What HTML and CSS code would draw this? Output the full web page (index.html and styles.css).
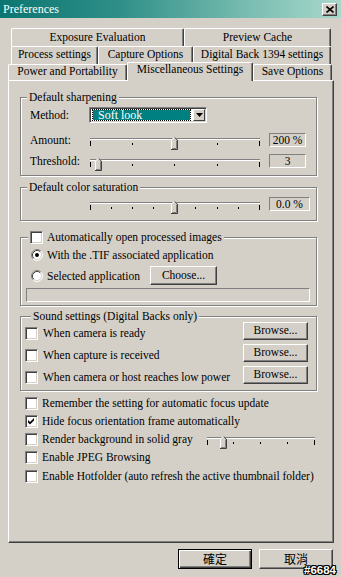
FILE: index.html
```html
<!DOCTYPE html>
<html>
<head>
<meta charset="utf-8">
<title>Preferences</title>
<link rel="stylesheet" href="styles.css">
</head>
<body>
<div class="window">
  <div class="titlebar">
    <span class="title">Preferences</span>
    <span class="close"><svg width="8" height="7" viewBox="0 0 8 7"><path d="M0.5 0.5 L7.5 6.5 M7.5 0.5 L0.5 6.5" stroke="#000" stroke-width="1.6" fill="none"/></svg></span>
  </div>

  <div class="tabs">
    <div class="tabrow row1">
      <div class="tab">Exposure Evaluation</div>
      <div class="tab">Preview Cache</div>
    </div>
    <div class="tabrow row2">
      <div class="tab">Process settings</div>
      <div class="tab">Capture Options</div>
      <div class="tab">Digital Back 1394 settings</div>
    </div>
    <div class="tabrow row3">
      <div class="tab">Power and Portability</div>
      <div class="tab active">Miscellaneous Settings</div>
      <div class="tab">Save Options</div>
    </div>
  </div>

  <div class="panel">
    <fieldset class="group g-sharp">
      <legend>Default sharpening</legend>
      <div class="row method-row">
        <span class="lbl">Method:</span>
        <div class="combo">
          <div class="combo-field"><span class="combo-sel">Soft look</span></div>
          <div class="combo-btn"><svg width="7" height="4" viewBox="0 0 7 4"><polygon points="0,0 7,0 3.5,4" fill="#000"/></svg></div>
        </div>
      </div>
      <div class="row slider-row amount-row">
        <span class="lbl">Amount:</span>
        <svg class="trk" width="172" height="16" viewBox="0 0 172 16">
          <rect x="1" y="6" width="170" height="1" fill="#808080"/>
          <rect x="1" y="7" width="170" height="1" fill="#fff"/>
          <g fill="#000">
            <rect x="1" y="9" width="1" height="5"/>
            <rect x="43" y="11" width="1" height="2"/>
            <rect x="85" y="11" width="1" height="2"/>
            <rect x="128" y="11" width="1" height="2"/>
            <rect x="170" y="9" width="1" height="5"/>
          </g>
          <g transform="translate(82 5)">
            <path d="M0 3 L3 0 L4 0 L7 3 L7 13 L0 13 Z" fill="#d4d0c8"/>
            <path d="M0.5 13 V3.2 L3.3 0.5" stroke="#fff" fill="none"/>
            <path d="M3.7 0.5 L6.5 3.2 V12.5 H0" stroke="#404040" fill="none"/>
            <path d="M5.5 3.6 V11.5 H1" stroke="#808080" fill="none"/>
          </g>
        </svg>
        <div class="valbox">200 %</div>
      </div>
      <div class="row slider-row threshold-row">
        <span class="lbl">Threshold:</span>
        <svg class="trk" width="172" height="16" viewBox="0 0 172 16">
          <rect x="1" y="6" width="170" height="1" fill="#808080"/>
          <rect x="1" y="7" width="170" height="1" fill="#fff"/>
          <g fill="#000">
            <rect x="1" y="9" width="1" height="5"/>
            <rect x="43" y="11" width="1" height="2"/>
            <rect x="85" y="11" width="1" height="2"/>
            <rect x="128" y="11" width="1" height="2"/>
            <rect x="170" y="9" width="1" height="5"/>
          </g>
          <g transform="translate(6 5)">
            <path d="M0 3 L3 0 L4 0 L7 3 L7 13 L0 13 Z" fill="#d4d0c8"/>
            <path d="M0.5 13 V3.2 L3.3 0.5" stroke="#fff" fill="none"/>
            <path d="M3.7 0.5 L6.5 3.2 V12.5 H0" stroke="#404040" fill="none"/>
            <path d="M5.5 3.6 V11.5 H1" stroke="#808080" fill="none"/>
          </g>
        </svg>
        <div class="valbox">3</div>
      </div>
    </fieldset>

    <fieldset class="group g-sat">
      <legend>Default color saturation</legend>
      <div class="row slider-row sat-row">
        <svg class="trk" width="172" height="16" viewBox="0 0 172 16">
          <rect x="1" y="6" width="170" height="1" fill="#808080"/>
          <rect x="1" y="7" width="170" height="1" fill="#fff"/>
          <g fill="#000">
            <rect x="1" y="9" width="1" height="5"/>
            <rect x="22" y="11" width="1" height="2"/>
            <rect x="43" y="11" width="1" height="2"/>
            <rect x="64" y="11" width="1" height="2"/>
            <rect x="85" y="11" width="1" height="2"/>
            <rect x="106" y="11" width="1" height="2"/>
            <rect x="128" y="11" width="1" height="2"/>
            <rect x="149" y="11" width="1" height="2"/>
            <rect x="170" y="9" width="1" height="5"/>
          </g>
          <g transform="translate(82 5)">
            <path d="M0 3 L3 0 L4 0 L7 3 L7 13 L0 13 Z" fill="#d4d0c8"/>
            <path d="M0.5 13 V3.2 L3.3 0.5" stroke="#fff" fill="none"/>
            <path d="M3.7 0.5 L6.5 3.2 V12.5 H0" stroke="#404040" fill="none"/>
            <path d="M5.5 3.6 V11.5 H1" stroke="#808080" fill="none"/>
          </g>
        </svg>
        <div class="valbox wide">0.0 %</div>
      </div>
    </fieldset>

    <fieldset class="group g-open">
      <legend><span class="legend-cb"><span class="cb"></span><span class="legend-text">Automatically open processed images</span></span></legend>
      <div class="row radio-row first">
        <svg class="radio" width="12" height="12" viewBox="0 0 12 12">
          <circle cx="6" cy="6" r="5" fill="#fff"/>
          <path d="M2.11 9.89 A5.5 5.5 0 0 1 9.89 2.11" stroke="#808080" fill="none"/>
          <path d="M9.89 2.11 A5.5 5.5 0 0 1 2.11 9.89" stroke="#fff" fill="none"/>
          <path d="M2.82 9.18 A4.5 4.5 0 0 1 9.18 2.82" stroke="#404040" fill="none"/>
          <path d="M9.18 2.82 A4.5 4.5 0 0 1 2.82 9.18" stroke="#d4d0c8" fill="none"/>
          <circle cx="6" cy="6" r="2" fill="#000"/>
        </svg>
        <span class="radio-text">With the .TIF associated application</span>
      </div>
      <div class="row radio-row second">
        <svg class="radio" width="12" height="12" viewBox="0 0 12 12">
          <circle cx="6" cy="6" r="5" fill="#fff"/>
          <path d="M2.11 9.89 A5.5 5.5 0 0 1 9.89 2.11" stroke="#808080" fill="none"/>
          <path d="M9.89 2.11 A5.5 5.5 0 0 1 2.11 9.89" stroke="#fff" fill="none"/>
          <path d="M2.82 9.18 A4.5 4.5 0 0 1 9.18 2.82" stroke="#404040" fill="none"/>
          <path d="M9.18 2.82 A4.5 4.5 0 0 1 2.82 9.18" stroke="#d4d0c8" fill="none"/>
        </svg>
        <span class="radio-text fixed">Selected application</span>
        <div class="btn choose">Choose...</div>
      </div>
      <div class="textfield"></div>
    </fieldset>

    <fieldset class="group g-sound">
      <legend>Sound settings (Digital Backs only)</legend>
      <div class="row sound-row">
        <span class="cb"></span><span class="cb-text">When camera is ready</span>
        <div class="btn browse">Browse...</div>
      </div>
      <div class="row sound-row">
        <span class="cb"></span><span class="cb-text">When capture is received</span>
        <div class="btn browse">Browse...</div>
      </div>
      <div class="row sound-row">
        <span class="cb"></span><span class="cb-text">When camera or host reaches low power</span>
        <div class="btn browse">Browse...</div>
      </div>
    </fieldset>

    <div class="checks">
      <div class="row check-row"><span class="cb"></span><span class="cb-text">Remember the setting for automatic focus update</span></div>
      <div class="row check-row"><span class="cb"><svg width="11" height="11" viewBox="0 0 11 11"><polygon points="2,4 4,6 8,2 8,4.5 4,8.5 2,6.5" fill="#000"/></svg></span><span class="cb-text">Hide focus orientation frame automatically</span></div>
      <div class="row check-row render-row">
        <span class="cb"></span><span class="cb-text render-text">Render background in solid gray</span>
        <svg class="trk small" width="110" height="16" viewBox="0 0 110 16">
          <rect x="1" y="6" width="108" height="1" fill="#808080"/>
          <rect x="1" y="7" width="108" height="1" fill="#fff"/>
          <g fill="#000">
            <rect x="1" y="9" width="1" height="5"/>
            <rect x="27" y="11" width="1" height="2"/>
            <rect x="54" y="11" width="1" height="2"/>
            <rect x="81" y="11" width="1" height="2"/>
            <rect x="108" y="9" width="1" height="5"/>
          </g>
          <g transform="translate(14 5)">
            <path d="M0 3 L3 0 L4 0 L7 3 L7 13 L0 13 Z" fill="#d4d0c8"/>
            <path d="M0.5 13 V3.2 L3.3 0.5" stroke="#fff" fill="none"/>
            <path d="M3.7 0.5 L6.5 3.2 V12.5 H0" stroke="#404040" fill="none"/>
            <path d="M5.5 3.6 V11.5 H1" stroke="#808080" fill="none"/>
          </g>
        </svg>
      </div>
      <div class="row check-row"><span class="cb"></span><span class="cb-text">Enable JPEG Browsing</span></div>
      <div class="row check-row last"><span class="cb"></span><span class="cb-text clip">Enable Hotfolder (auto refresh the active thumbnail folder)</span></div>
    </div>
  </div>

  <div class="buttons">
    <div class="btn dlg default">確定</div>
    <div class="btn dlg">取消</div>
  </div>

  <div class="watermark">#6684</div>
</div>
</body>
</html>
```

FILE: styles.css
```css
* { box-sizing: border-box; }
html, body { margin: 0; padding: 0; }
body {
  width: 341px;
  height: 577px;
  overflow: hidden;
  background: #d4d0c8;
  font-family: "Liberation Serif", "Times New Roman", serif;
  font-size: 11.5px;
  color: #000;
}
.window { position: relative; width: 341px; height: 577px; }

/* title bar */
.titlebar {
  height: 18px;
  display: flex;
  align-items: flex-start;
  justify-content: space-between;
  padding: 0 4px 0 3px;
  background: linear-gradient(to right, #0b7671 0%, #2f8f88 35%, #7dbfb3 75%, #a9d8cc 100%);
  color: #fff;
}
.title { line-height: 19px; font-size: 12px; }
.close {
  margin-top: 3px;
  width: 15px;
  height: 13px;
  background: #d4d0c8;
  border: 1px solid;
  border-color: #fff #404040 #404040 #fff;
  box-shadow: inset -1px -1px 0 #808080;
  display: flex;
  align-items: center;
  justify-content: center;
}

/* tabs */
.tabs { margin-top: 10px; }
.tabrow { display: grid; height: 18px; }
.row1 { grid-template-columns: 173px 147px; margin-left: 11px; }
.row2 { grid-template-columns: 87px 95px 138px; margin-left: 11px; }
.row3 { grid-template-columns: 119px 126px 79px; margin-left: 8px; height: 16px; }
.tab {
  height: 18px;
  background: #d4d0c8;
  border-top: 1px solid #fff;
  border-left: 1px solid #fff;
  border-right: 1px solid #404040;
  box-shadow: inset -1px 0 0 #808080;
  border-radius: 2px 2px 0 0;
  text-align: center;
  line-height: 16px;
  white-space: nowrap;
}
.row2 .tab { line-height: 14px; }
.row3 .tab { height: 16px; line-height: 13px; }
.row3 .tab.active {
  position: relative;
  z-index: 1;
  height: 19px;
  margin-top: -2px;
  line-height: 13px;
}

/* main panel */
.panel {
  margin-left: 8px;
  width: 326px;
  height: 463px;
  border: 1px solid;
  border-color: #fff #404040 #404040 #fff;
  box-shadow: inset -1px -1px 0 #808080;
  padding: 10px 16px 0 11px;
}

.group {
  margin: 0;
  padding: 0;
  min-width: 0;
  width: 297px;
  border: 1px solid #808080;
  box-shadow: inset 1px 1px 0 #fff, 1px 1px 0 #fff;
}
.group legend {
  padding: 0 2px;
  margin-left: 6px;
  line-height: 12px;
  background: #d4d0c8;
}

.row { display: flex; align-items: center; }
.lbl { width: 59px; flex: none; }
.trk { flex: none; overflow: visible; display: block; }

/* default sharpening */
.g-sharp { padding: 4px 0 6px; }
.method-row { height: 16px; padding-left: 9px; }
.combo {
  width: 118px;
  height: 16px;
  display: flex;
  border: 1px solid;
  border-color: #808080 #fff #fff #808080;
  box-shadow: inset 1px 1px 0 #404040, inset -1px -1px 0 #d4d0c8;
  background: #fff;
  padding: 1px 1px 1px 2px;
}
.combo-field { flex: 1; display: flex; padding-right: 2px; }
.combo-sel {
  flex: 1;
  display: flex;
  align-items: center;
  background: #008080;
  background-clip: padding-box;
  border: 1px dotted #000;
  color: #fff;
  font-size: 12px;
  line-height: 12px;
  padding-left: 5px;
  white-space: nowrap;
}
.combo-btn {
  width: 12px;
  background: #d4d0c8;
  border: 1px solid;
  border-color: #fff #404040 #404040 #fff;
  display: flex;
  align-items: center;
  justify-content: center;
}
.combo-btn svg { display: block; }

.slider-row { height: 16px; padding-left: 9px; align-items: flex-start; }
.slider-row .lbl { line-height: 16px; }
.amount-row { margin-top: 9px; }
.threshold-row { margin-top: 5px; }
.valbox {
  margin: 1px 0 0 8px;
  width: 37px;
  height: 14px;
  border: 1px solid;
  border-color: #808080 #fff #fff #808080;
  text-align: center;
  line-height: 12px;
}
.valbox.wide { width: 41px; }

/* saturation */
.g-sat { margin-top: 5px; padding: 3px 0 8px; }
.sat-row { padding-left: 68px; }

/* open processed */
.g-open { margin-top: 10px; padding: 4px 0 3px; }
.g-open legend { margin-left: 7px; line-height: 13px; }
.legend-cb { display: flex; align-items: center; height: 13px; }
.legend-text { margin-left: 4px; line-height: 13px; white-space: nowrap; }
.radio-row { padding-left: 10px; }
.radio-row.first { height: 14px; }
.radio-row.second { height: 19px; margin-top: 4px; }
.radio { flex: none; display: block; }
.radio-text { margin-left: 4px; line-height: 14px; white-space: nowrap; }
.radio-text.fixed { width: 103px; flex: none; }
.textfield {
  margin: 3px 0 0 5px;
  width: 284px;
  height: 14px;
  border: 1px solid;
  border-color: #808080 #fff #fff #808080;
}

/* buttons */
.btn {
  background: #d4d0c8;
  border: 1px solid;
  border-color: #fff #404040 #404040 #fff;
  box-shadow: inset -1px -1px 0 #808080;
  text-align: center;
  flex: none;
}
.choose { width: 67px; height: 19px; line-height: 17px; }
.browse { width: 65px; height: 18px; line-height: 15px; margin-left: auto; }

/* sound */
.g-sound { margin-top: 4px; padding: 0 8px 6px 4px; }
.sound-row { height: 18px; align-items: flex-end; }
.sound-row + .sound-row { margin-top: 4px; }
.sound-row .cb-text { margin-left: 5px; }

/* checkbox */
.cb {
  width: 13px;
  height: 13px;
  flex: none;
  background: #fff;
  border: 1px solid;
  border-color: #808080 #fff #fff #808080;
  box-shadow: inset 1px 1px 0 #404040, inset -1px -1px 0 #d4d0c8;
  display: flex;
  align-items: center;
  justify-content: center;
}
.cb svg { display: block; }
.cb-text { margin-left: 4px; line-height: 14px; white-space: nowrap; }

/* checks list */
.checks { margin-top: 3px; padding-left: 5px; }
.check-row { height: 18px; }
.check-row.last { margin-top: 1px; }
.render-text { width: 164px; flex: none; }
.render-row .trk { align-self: flex-start; margin-top: 1px; }
.clip { overflow: hidden; width: 272px; }

/* dialog buttons */
.buttons {
  display: flex;
  justify-content: flex-end;
  gap: 7px;
  margin-top: 6px;
  padding-right: 8px;
}
.dlg {
  width: 74px;
  height: 20px;
  font-family: "Noto Sans CJK TC", "Noto Sans CJK SC", sans-serif;
  font-size: 12px;
  line-height: 17px;
}
.dlg.default {
  border: 1px solid #000;
  box-shadow: inset 1px 1px 0 #fff, inset -1px -1px 0 #404040, inset -2px -2px 0 #808080;
}

.watermark {
  position: absolute;
  right: 5px;
  bottom: 1px;
  font-family: "Liberation Sans", Arial, sans-serif;
  font-weight: bold;
  font-size: 11.5px;
  line-height: 12px;
  color: #fff;
  text-shadow: -1px 0 #000, 1px 0 #000, 0 -1px #000, 0 1px #000, 1px 1px #000, -1px -1px #000, 1px -1px #000, -1px 1px #000;
}
```
